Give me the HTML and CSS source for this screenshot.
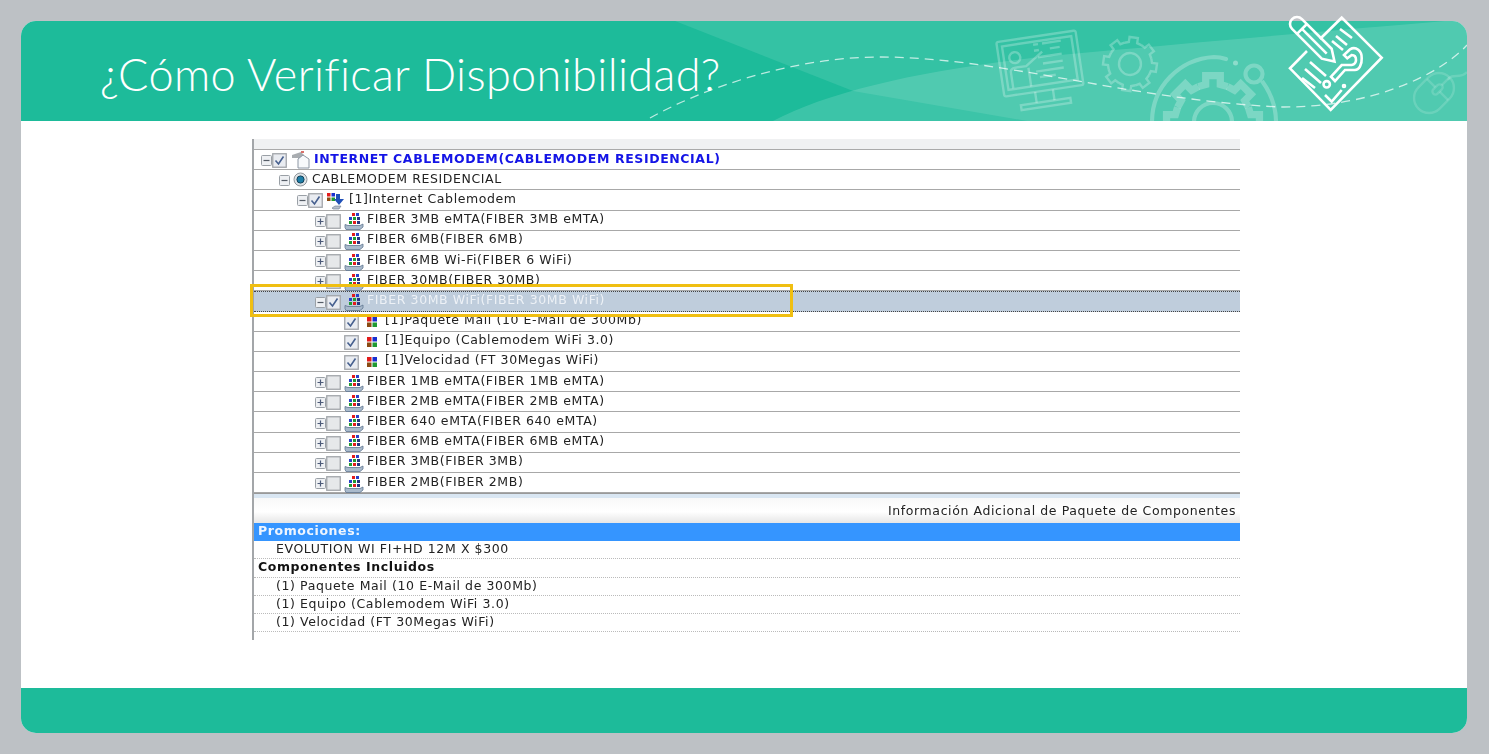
FILE: index.html
```html
<!DOCTYPE html>
<html lang="es">

<head>
    <meta charset="UTF-8">
    <title>¿Cómo Verificar Disponibilidad?</title>
    <link rel="stylesheet" href="styles.css">
</head>

<body>

    <!-- shared tree icons -->
    <svg class="defs" aria-hidden="true">
        <defs>
            <symbol id="minus" viewBox="0 0 11 11">
                <rect x=".5" y=".5" width="10" height="10" rx="1" fill="#eef0f3" stroke="#9aa0a6"/>
                <path d="M2.5 5.5h6" stroke="#555c66" stroke-width="1.2"/>
            </symbol>
            <symbol id="plus" viewBox="0 0 11 11">
                <rect x=".5" y=".5" width="10" height="10" rx="1" fill="#eef0f3" stroke="#9aa0a6"/>
                <path d="M2.5 5.5h6M5.5 2.5v6" stroke="#4c5a78" stroke-width="1.2"/>
            </symbol>
            <symbol id="box" viewBox="0 0 15 15">
                <rect x=".75" y=".75" width="13.5" height="13.5" fill="#e6e8ea" stroke="#a2a6aa" stroke-width="1.3"/>
            </symbol>
            <symbol id="tick" viewBox="0 0 15 15">
                <rect x=".75" y=".75" width="13.5" height="13.5" fill="#e9ecf1" stroke="#a2a6aa" stroke-width="1.3"/>
                <path d="M3.5 7.5l3 3.5 5-7.5" fill="none" stroke="#47608f" stroke-width="1.6"/>
            </symbol>
            <symbol id="radio" viewBox="0 0 15 15">
                <circle cx="7.5" cy="7.5" r="6.5" fill="#dfe3e6" stroke="#8f959a"/>
                <circle cx="7.5" cy="7.5" r="3.6" fill="#1f7fa8" stroke="#123f58"/>
            </symbol>
            <symbol id="house" viewBox="0 0 20 18">
                <path d="M1 4l9-3 3 3v3H1z" fill="#a9adb1"/>
                <path d="M7 8l5-4 6 4v9H7z" fill="#f7f9fb" stroke="#8c96a3"/>
                <rect x="10" y="0" width="3" height="2" fill="#d9706a"/>
            </symbol>
            <symbol id="four" viewBox="0 0 12 12">
                <rect x="1" y="1" width="4.5" height="4.5" fill="#e21c1c"/>
                <rect x="6.5" y="1" width="4.5" height="4.5" fill="#1a2fd0"/>
                <rect x="1" y="6.5" width="4.5" height="4.5" fill="#8a4a12"/>
                <rect x="6.5" y="6.5" width="4.5" height="4.5" fill="#1f9a32"/>
            </symbol>
            <symbol id="arrow" viewBox="0 0 20 18">
                <rect x="1" y="1" width="3.5" height="3.5" fill="#e21c1c"/>
                <rect x="5.5" y="1" width="3.5" height="3.5" fill="#1a2fd0"/>
                <rect x="1" y="5.5" width="3.5" height="3.5" fill="#8a4a12"/>
                <rect x="5.5" y="5.5" width="3.5" height="3.5" fill="#1f9a32"/>
                <path d="M10 2h4v5h4l-5 6-5-6h2z" fill="#1f50b8"/>
                <path d="M6 16l3-2h6l-2 3H7z" fill="#b5bfcc" stroke="#6c7a8d" stroke-width=".6"/>
            </symbol>
            <symbol id="pack" viewBox="0 0 20 18">
                <path d="M1 12.500l3 1h12l3-1.500v3l-3 2.500H2l-1-2z" fill="#a9bacc" stroke="#5f7690" stroke-width=".8"/>
                <rect x="8" y="1" width="3" height="3" fill="#e21c1c"/>
                <rect x="12" y="1" width="3" height="3" fill="#2840c8"/>
                <rect x="5" y="5" width="3" height="3" fill="#2840c8"/>
                <rect x="9" y="5" width="3" height="3" fill="#1f9a32"/>
                <rect x="13" y="5" width="3" height="3" fill="#26367f"/>
                <rect x="5" y="9" width="3" height="3" fill="#1f9a32"/>
                <rect x="9" y="9" width="3" height="3" fill="#e21c1c"/>
                <rect x="13" y="9" width="3" height="3" fill="#26367f"/>
            </symbol>
        </defs>
    </svg>

    <div class="slide">
        <header class="top">
            <!-- background art, coordinates are the page's own -->
            <svg class="art" viewBox="21 21 1446 100" aria-hidden="true">
                <defs>
                    <polyline id="tooth" points="-8.42,-20.33 -4.2,-21.6 -4.2,-26.7 4.2,-26.7 4.2,-21.6 8.42,-20.33"/>
                    <g id="cog">
                        <use href="#tooth"/>
                        <use href="#tooth" transform="rotate(45)"/>
                        <use href="#tooth" transform="rotate(90)"/>
                        <use href="#tooth" transform="rotate(135)"/>
                        <use href="#tooth" transform="rotate(180)"/>
                        <use href="#tooth" transform="rotate(225)"/>
                        <use href="#tooth" transform="rotate(270)"/>
                        <use href="#tooth" transform="rotate(315)"/>
                    </g>
                </defs>
                <path class="band" d="M675 21L853 91L1033 122H1467V21z"/>
                <path class="band-light" d="M771 122C830 90 930 68 1060 55C1200 42 1340 30 1445 21H1467V122z"/>

                <g class="faint">
                    <g transform="translate(1040 64) rotate(-8.5)">
                        <rect x="-40" y="-28" width="80" height="55" rx="2"/>
                        <rect x="-35" y="-23" width="70" height="44"/>
                        <path d="M-9 27v11M9 27v11"/>
                        <rect x="-25" y="38" width="50" height="5"/>
                        <circle cx="-24" cy="-10" r="5.5"/>
                        <path d="M-30 20V4q0-4 5-4h11l18-12M-12 21V2"/>
                        <path d="M-4 -20h5M5 -20h19M-4 -14h5M12 -14h10M-1 -7h24M3 0h20M-5 7h28M-2 13h16"/>
                    </g>
                    <g transform="translate(1130 64) rotate(8)">
                        <use href="#cog"/>
                        <circle r="11"/>
                    </g>
                    <g class="thick">
                        <g transform="translate(1213 122) scale(1.74)">
                            <use href="#cog"/>
                        </g>
                        <circle cx="1213" cy="122" r="19"/>
                        <path stroke-linecap="round" d="M1152 122C1152 86 1180 59 1214 57Q1220 57 1226 59"/>
                        <circle cx="1254" cy="74" r="8.5"/>
                        <path d="M1262 81Q1276 100 1276 122"/>
                    </g>
                    <circle class="dot" cx="1235.5" cy="63" r="2.5"/>
                    <g class="mouse">
                        <g transform="translate(1434 93) rotate(45)">
                            <rect x="-15" y="-22" width="30" height="44" rx="15"/>
                            <rect x="-3" y="-11" width="6" height="12" rx="3"/>
                            <path d="M-15 -5H-3M3 -5H15M0 -22v11"/>
                        </g>
                        <path d="M1448 80C1452 72 1460 80 1467 72"/>
                    </g>
                </g>

                <path class="dash" d="M650 118C700 90 790 57 880 57C1000 57 1130 100 1280 107C1370 108 1440 75 1467 45"/>
            </svg>
            <h1 class="title">¿Cómo Verificar Disponibilidad?</h1>
        </header>

        <!-- logo pokes out of the header, so it sits on the slide -->
        <svg class="logo" viewBox="1285 12 104 104" aria-hidden="true">
            <path d="M1320 39L1341.7 17.700L1381.7 57.700L1330.7 110L1290 68.300L1307 51"/>
            <g transform="translate(1297 24) rotate(45)">
                <path d="M0 -7L42 -7L53 0L42 7L0 7A7 7 0 0 1 0 -7z"/>
                <path d="M7 -7V7M7 0H42"/>
            </g>
            <path d="M1340 29L1352 38M1336 36L1347 45M1332 41L1343 50M1310 62L1326 76M1305 69L1321 83M1302 78L1315 88"/>
            <path d="M1344 55L1350 49.300C1356 46 1362 51 1361.700 58.300C1362 65 1359 70 1355 70H1345L1335 81L1331 76.700L1341.700 65H1351.700Q1356 64 1356 60Q1356 55 1351.700 55L1347.300 58.300z"/>
            <circle cx="1326.7" cy="84.3" r="3.2"/>
            <circle cx="1344" cy="86" r="1"/>
            <path d="M1325 95L1331.700 101.700L1341.700 90"/>
        </svg>

        <main class="content">
            <div class="panel">
                <div class="toolbar"></div>

                <div class="tree">
                    <div class="row lvl0 root">
                        <svg class="exp"><use href="#minus"/></svg>
                        <svg class="cb"><use href="#tick"/></svg>
                        <svg class="ico house"><use href="#house"/></svg>
                        <span>INTERNET CABLEMODEM(CABLEMODEM RESIDENCIAL)</span>
                    </div>
                    <div class="row lvl1">
                        <svg class="exp"><use href="#minus"/></svg>
                        <svg class="cb radio"><use href="#radio"/></svg>
                        <span>CABLEMODEM RESIDENCIAL</span>
                    </div>
                    <div class="row lvl2">
                        <svg class="exp"><use href="#minus"/></svg>
                        <svg class="cb"><use href="#tick"/></svg>
                        <svg class="ico"><use href="#arrow"/></svg>
                        <span>[1]Internet Cablemodem</span>
                    </div>
                    <div class="row lvl3">
                        <svg class="exp"><use href="#plus"/></svg>
                        <svg class="cb"><use href="#box"/></svg>
                        <svg class="ico"><use href="#pack"/></svg>
                        <span>FIBER 3MB eMTA(FIBER 3MB eMTA)</span>
                    </div>
                    <div class="row lvl3">
                        <svg class="exp"><use href="#plus"/></svg>
                        <svg class="cb"><use href="#box"/></svg>
                        <svg class="ico"><use href="#pack"/></svg>
                        <span>FIBER 6MB(FIBER 6MB)</span>
                    </div>
                    <div class="row lvl3">
                        <svg class="exp"><use href="#plus"/></svg>
                        <svg class="cb"><use href="#box"/></svg>
                        <svg class="ico"><use href="#pack"/></svg>
                        <span>FIBER 6MB Wi-Fi(FIBER 6 WiFi)</span>
                    </div>
                    <div class="row lvl3">
                        <svg class="exp"><use href="#plus"/></svg>
                        <svg class="cb"><use href="#box"/></svg>
                        <svg class="ico"><use href="#pack"/></svg>
                        <span>FIBER 30MB(FIBER 30MB)</span>
                    </div>
                    <div class="row lvl3 selected">
                        <svg class="exp"><use href="#minus"/></svg>
                        <svg class="cb"><use href="#tick"/></svg>
                        <svg class="ico"><use href="#pack"/></svg>
                        <span>FIBER 30MB WiFi(FIBER 30MB WiFi)</span>
                    </div>
                    <div class="row leaf">
                        <svg class="cb"><use href="#tick"/></svg>
                        <svg class="four"><use href="#four"/></svg>
                        <span>[1]Paquete Mail (10 E-Mail de 300Mb)</span>
                    </div>
                    <div class="row leaf">
                        <svg class="cb"><use href="#tick"/></svg>
                        <svg class="four"><use href="#four"/></svg>
                        <span>[1]Equipo (Cablemodem WiFi 3.0)</span>
                    </div>
                    <div class="row leaf">
                        <svg class="cb"><use href="#tick"/></svg>
                        <svg class="four"><use href="#four"/></svg>
                        <span>[1]Velocidad (FT 30Megas WiFi)</span>
                    </div>
                    <div class="row lvl3">
                        <svg class="exp"><use href="#plus"/></svg>
                        <svg class="cb"><use href="#box"/></svg>
                        <svg class="ico"><use href="#pack"/></svg>
                        <span>FIBER 1MB eMTA(FIBER 1MB eMTA)</span>
                    </div>
                    <div class="row lvl3">
                        <svg class="exp"><use href="#plus"/></svg>
                        <svg class="cb"><use href="#box"/></svg>
                        <svg class="ico"><use href="#pack"/></svg>
                        <span>FIBER 2MB eMTA(FIBER 2MB eMTA)</span>
                    </div>
                    <div class="row lvl3">
                        <svg class="exp"><use href="#plus"/></svg>
                        <svg class="cb"><use href="#box"/></svg>
                        <svg class="ico"><use href="#pack"/></svg>
                        <span>FIBER 640 eMTA(FIBER 640 eMTA)</span>
                    </div>
                    <div class="row lvl3">
                        <svg class="exp"><use href="#plus"/></svg>
                        <svg class="cb"><use href="#box"/></svg>
                        <svg class="ico"><use href="#pack"/></svg>
                        <span>FIBER 6MB eMTA(FIBER 6MB eMTA)</span>
                    </div>
                    <div class="row lvl3">
                        <svg class="exp"><use href="#plus"/></svg>
                        <svg class="cb"><use href="#box"/></svg>
                        <svg class="ico"><use href="#pack"/></svg>
                        <span>FIBER 3MB(FIBER 3MB)</span>
                    </div>
                    <div class="row lvl3">
                        <svg class="exp"><use href="#plus"/></svg>
                        <svg class="cb"><use href="#box"/></svg>
                        <svg class="ico"><use href="#pack"/></svg>
                        <span>FIBER 2MB(FIBER 2MB)</span>
                    </div>

                    <div class="marker"></div>
                </div>

                <div class="info">
                    <div class="info-head">Información Adicional de Paquete de Componentes</div>
                    <div class="promo-head">Promociones:</div>
                    <div class="line sub">EVOLUTION WI FI+HD 12M X $300</div>
                    <div class="line strong">Componentes Incluidos</div>
                    <div class="line sub">(1) Paquete Mail (10 E-Mail de 300Mb)</div>
                    <div class="line sub">(1) Equipo (Cablemodem WiFi 3.0)</div>
                    <div class="line sub">(1) Velocidad (FT 30Megas WiFi)</div>
                </div>
            </div>
        </main>

        <footer class="bottom"></footer>
    </div>

</body>

</html>
```

FILE: styles.css
```css
* {
    box-sizing: border-box;
}

body {
    margin: 0;
    height: 754px;
    padding: 21px 22px 21px 21px;
    background-color: #bdc1c5;
    overflow: hidden;
}

.defs {
    position: absolute;
    width: 0;
    height: 0;
}

.slide {
    position: relative;
    display: flex;
    flex-direction: column;
    height: 100%;
    background-color: #fff;
    border-radius: 15px;
}

/* header */
.top {
    position: relative;
    display: flex;
    align-items: center;
    height: 100px;
    padding: 5px 0 0 79px;
    background-color: #1dbb9a;
    border-radius: 15px 15px 0 0;
    overflow: hidden;
}

.art {
    position: absolute;
    top: 0;
    left: 0;
    width: 100%;
    height: 100%;
}

.band {
    fill: rgba(255, 255, 255, 0.1);
}

.band-light {
    fill: rgba(255, 255, 255, 0.14);
}

.faint {
    fill: none;
    stroke: rgba(255, 255, 255, 0.25);
    stroke-width: 2.4;
}

.thick {
    stroke-width: 4.2;
}

.mouse {
    opacity: 0.6;
}

.dot {
    fill: rgba(255, 255, 255, 0.35);
    stroke: none;
}

.dash {
    fill: none;
    stroke: rgba(255, 255, 255, 0.7);
    stroke-width: 1.3;
    stroke-dasharray: 9 6;
}

.title {
    position: relative;
    margin: 0;
    font-family: Lato, sans-serif;
    font-size: 45px;
    font-weight: 300;
    letter-spacing: 0.37px;
    color: #fff;
    white-space: nowrap;
}

.logo {
    position: absolute;
    top: -9px;
    left: 1264px;
    width: 104px;
    height: 104px;
    fill: none;
    stroke: #fff;
    stroke-width: 2.6;
}

/* screenshot of the provisioning tool */
.content {
    flex: 1;
    padding: 18px 0 0 231px;
}

.panel {
    width: 988px;
    height: 501px;
    font-family: "DejaVu Sans", sans-serif;
    font-size: 12.5px;
    letter-spacing: 0.6px;
    color: #222;
    border-left: 2px solid #a3a6a9;
    filter: blur(0.3px);
}

.toolbar {
    height: 11px;
    background: #f0f1f2;
    border-bottom: 1px solid #aaa;
}

.tree {
    position: relative;
    display: grid;
    grid-auto-rows: 20.19px;
    border-bottom: 1px solid #999;
}

.row {
    display: flex;
    align-items: center;
    padding-top: 2px;
    border-bottom: 1px solid #a8a8a8;
    white-space: nowrap;
}

.row span {
    margin-top: -5px;
}

.exp {
    width: 11px;
    height: 11px;
    flex: none;
}

.cb {
    width: 15px;
    height: 15px;
    flex: none;
}

.radio {
    margin-left: 3px;
    margin-right: 4px;
    margin-top: -2px;
}

.ico {
    width: 20px;
    height: 18px;
    flex: none;
    margin: 0 3px 0 3px;
}

.house {
    margin-right: 3px;
    margin-left: 4px;
    margin-top: -2px;
}

.four {
    width: 12px;
    height: 12px;
    flex: none;
    margin: 0 7px;
}

.lvl0 {
    padding-left: 7px;
}

.lvl1 {
    padding-left: 25px;
}

.lvl2 {
    padding-left: 43px;
}

.lvl3 {
    padding-left: 61px;
}

.leaf {
    padding-left: 90px;
}

.root span {
    font-weight: bold;
    color: #1414e6;
}

.selected {
    background-color: #bfcddc;
    border-top: 1px dotted #444;
    border-bottom: 1px dotted #444;
}

.selected span {
    color: #edf1f6;
}

/* yellow callout drawn over the tree */
.marker {
    position: absolute;
    top: 134px;
    left: -4px;
    width: 543px;
    height: 33px;
    border: 3px solid #f0bf12;
}

.info {
    border-top: 4px solid #d9e6f2;
}

.info-head {
    height: 25px;
    padding: 5px 4px 0 0;
    text-align: right;
    background: linear-gradient(#f8f8f8, #fff 55%, #e6e6e6);
}

.promo-head {
    height: 18px;
    padding: 0 0 0 4px;
    font-weight: bold;
    color: #eef5ff;
    background-color: #3595ff;
}

.line {
    height: 18.2px;
    border-bottom: 1px dotted #bbb;
}

.sub {
    padding-left: 22px;
}

.strong {
    padding-left: 4px;
    font-weight: bold;
    color: #111;
}

.bottom {
    height: 45px;
    margin-top: auto;
    background-color: #1dbb9a;
    border-radius: 0 0 15px 15px;
}
```
